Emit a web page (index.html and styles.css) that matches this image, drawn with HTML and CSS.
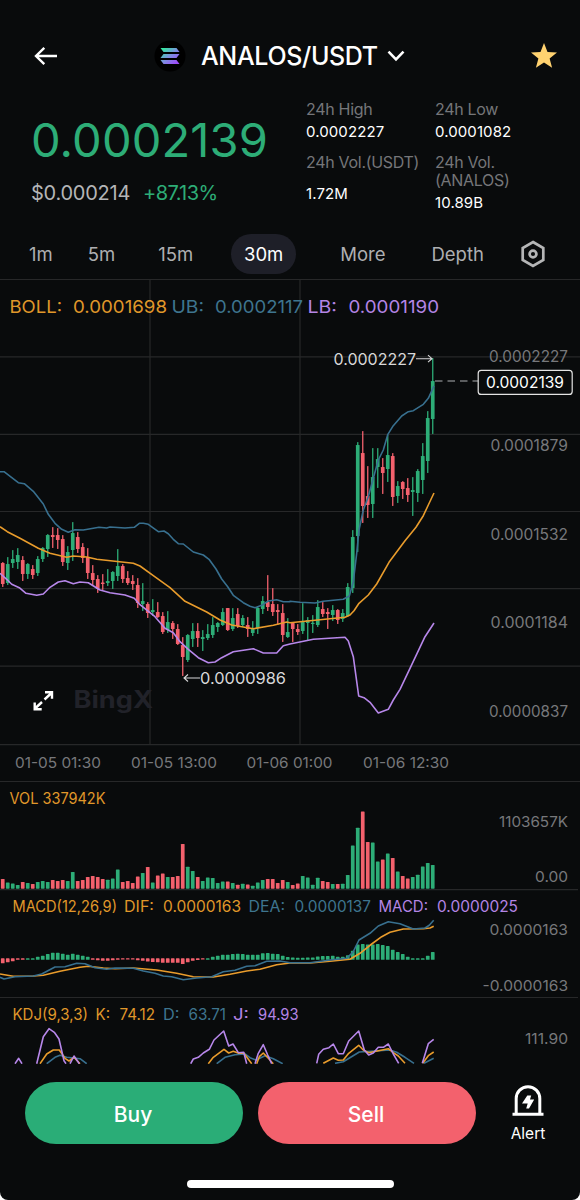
FILE: index.html
```html
<!DOCTYPE html>
<html lang="en">
<head>
<meta charset="utf-8">
<title>ANALOS/USDT</title>
<link rel="stylesheet" href="styles.css">
</head>
<body>
<main class="app">
  <header class="header">
    <svg class="back" viewBox="0 0 24 20"><path d="M23 10H2M10.3 1.8L2 10l8.3 8.2"/></svg>
    <div class="pair">
      <svg class="coin" viewBox="0 0 32 32">
        <defs><linearGradient id="sol" x1="0" y1="0" x2="1" y2="1"><stop offset="0.1" stop-color="#35e3a2"/><stop offset="0.5" stop-color="#7d8fe0"/><stop offset="0.9" stop-color="#9d4bfa"/></linearGradient></defs>
        <circle cx="16" cy="16" r="15.5" fill="#000"/>
        <path fill="url(#sol)" d="M6.5 8h16l3 4h-16zM9.5 14h16l-3 4h-16zM6.5 20h16l3 4h-16z"/>
      </svg>
      <h1 class="pair-name">ANALOS/USDT</h1>
      <svg class="chevron" viewBox="0 0 18 12"><path d="M1.5 1.7l7.5 7.6 7.5-7.6"/></svg>
    </div>
    <svg class="star" viewBox="0 0 28 28"><path d="M14 1l3.5 9 9.5.4-7.4 6 2.5 9.3L14 20.4l-8.1 5.3 2.5-9.3-7.4-6 9.5-.4z"/></svg>
  </header>

  <section class="summary">
    <div class="quote">
      <div class="price">0.0002139</div>
      <div class="sub"><span class="usd">$0.000214</span><span class="change">+87.13%</span></div>
    </div>
    <dl class="stats">
      <div class="stat"><dt>24h High</dt><dd>0.0002227</dd></div>
      <div class="stat"><dt>24h Low</dt><dd>0.0001082</dd></div>
      <div class="stat stat-tall"><dt>24h Vol.(USDT)</dt><dd>1.72M</dd></div>
      <div class="stat"><dt>24h Vol.<br>(ANALOS)</dt><dd>10.89B</dd></div>
    </dl>
  </section>

  <nav class="tabs">
    <span class="tab tab-1m">1m</span>
    <span class="tab tab-5m">5m</span>
    <span class="tab tab-15m">15m</span>
    <span class="tab tab-active">30m</span>
    <span class="tab tab-more">More</span>
    <span class="tab tab-depth">Depth</span>
    <svg class="gear" viewBox="0 0 26 28"><path d="M13 2l10.3 6v12L13 26 2.7 20V8z"/><circle cx="13" cy="14" r="3.4"/></svg>
  </nav>

  <section class="charts">
    <svg id="main" class="pane" height="465" viewBox="0 279 580 465"></svg>
    <svg id="time" class="pane" height="37" viewBox="0 744 580 37"></svg>
    <svg id="volume" class="pane" height="108" viewBox="0 781 580 108"></svg>
    <svg id="macd" class="pane" height="108" viewBox="0 889 580 108"></svg>
    <svg id="kdj" class="pane" height="67" viewBox="0 997 580 67"></svg>
  </section>

  <footer class="actions">
    <button class="btn buy">Buy</button>
    <button class="btn sell">Sell</button>
    <div class="alert">
      <svg class="alert-icon" viewBox="0 0 32 33"><path class="bell" d="M4.2 29V14.5a11.8 11.8 0 0 1 23.6 0V29M.5 30.2h31"/><path class="bolt" d="M15.3 11.5h3.9l-1.2 4h4.2L17 24.6h-2.8l1.5-5.2H10z"/></svg>
      <span>Alert</span>
    </div>
  </footer>
  <div class="home-bar"></div>
</main>
<script src="chart.js"></script>
</body>
</html>
```
FILE: styles.css
```css
* { box-sizing: border-box; }
html { background: #fff; }
body { margin: 0; font-family: Inter, "Liberation Sans", sans-serif; }
.app {
  width: 580px; height: 1200px; overflow: hidden;
  display: flex; flex-direction: column;
  background: #090b0c; color: #fff;
  border-radius: 0 0 8px 8px;
}
.header {
  height: 92px; padding: 19px 22px 0 34px;
  display: flex; align-items: center;
}
.back { width: 24px; height: 20px; fill: none; stroke: #fff; stroke-width: 2.4; }
.pair { display: flex; align-items: center; margin-left: 96px; }
.coin { width: 32px; height: 32px; margin-right: 15px; }
.pair-name { margin: 0; font-size: 25px; line-height: 32px; font-weight: 500; letter-spacing: -0.35px; }
.chevron { width: 18px; height: 12px; margin-left: 9px; fill: none; stroke: #fff; stroke-width: 2.6; }
.star { width: 28px; height: 28px; margin-left: auto; fill: #ffd270; }

.summary { height: 140px; display: flex; padding-left: 31px; }
.quote { width: 275px; padding-top: 19px; }
.price { font-size: 47px; line-height: 58px; letter-spacing: 0.15px; color: #2dad77; }
.sub { display: flex; gap: 13px; margin-top: 12px; font-size: 20px; line-height: 24px; letter-spacing: -0.25px; }
.usd { color: #b4b5b7; }
.change { color: #2dad77; letter-spacing: -0.6px; }
.stats {
  margin: 0; padding-top: 8px; display: grid; align-content: start;
  grid-template-columns: 129px 110px; row-gap: 10px;
}
.stat dt { color: #757679; font-size: 16px; line-height: 18px; letter-spacing: -0.3px; }
.stat dd { margin: 3px 0 0; font-size: 15px; line-height: 21px; padding-bottom: 1px; letter-spacing: 0.1px; }
.stat-tall dd { margin-top: 12px; }

.tabs {
  height: 47px; display: flex; align-items: center; padding: 0 34px 3px 29px;
  font-size: 18.5px; color: #aeafb1;
}
.tab-5m { margin-left: 35px; }
.tab-15m { margin-left: 43px; }
.tab-active {
  width: 65px; height: 40px; line-height: 41px; border-radius: 20px;
  margin-left: 38px; text-align: center; background: #1e1f28; color: #fff;
}
.tab-more { margin-left: 44px; }
.tab-depth { margin-left: 46px; }
.gear { width: 26px; height: 28px; margin-left: auto; fill: none; stroke: #b5b6b7; stroke-width: 2.7; }

.charts { display: flex; flex-direction: column; }
.pane { display: block; width: 580px; }
.grid { stroke: #272829; stroke-width: 1.2; }
.c-up { fill: #2dad77; }
.c-down { fill: #f3616d; }
.line { fill: none; stroke-width: 1.6; stroke-linejoin: round; }
.s-orange { stroke: #e99c2c; }
.s-blue { stroke: #38708f; }
.s-purple { stroke: #b787ea; }
.t-orange { fill: #e0982a; }
.t-blue { fill: #3e758f; }
.t-purple { fill: #b485e5; }
.t-gray { fill: #77787b; }
.t-white { fill: #fff; }
.t-mark { fill: #d8d8d9; }
.t-logo { fill: #212229; font-weight: 700; }
.arrow { fill: none; stroke: #d8d8d9; stroke-width: 1.1; }
.dash { stroke: #aeb0b1; stroke-width: 1.2; stroke-dasharray: 7.5 5; }
.tag { fill: #090b0c; stroke: #e4e4e4; stroke-width: 1.2; }
.expand { fill: none; stroke: #fff; stroke-width: 2.4; }

.actions { display: flex; gap: 15px; padding: 18px 0 0 25px; }
.btn {
  width: 218px; height: 62px; border: 0; border-radius: 31px; padding: 2px 2px 0 0;
  font: 500 21px Inter, "Liberation Sans", sans-serif; color: #fff;
}
.buy { background: #2aad77; }
.sell { background: #f3616d; }
.alert {
  width: 74px; padding-top: 2px; display: flex; flex-direction: column; align-items: center;
  font-size: 15.5px; line-height: 20px;
}
.alert-icon { width: 32px; height: 33px; margin-bottom: 7px; }
.bell { fill: none; stroke: #fff; stroke-width: 3; }
.bolt { fill: #fff; }
.home-bar { width: 207px; height: 8px; border-radius: 4px; background: #fff; margin: 36px 0 0 187px; }
```
FILE: chart.js
```js
const NS = 'http://www.w3.org/2000/svg';
const STEP = 5, X0 = 2.75;

function add(pane, tag, attrs, content) {
  const el = document.createElementNS(NS, tag);
  for (const k in attrs) el.setAttribute(k, attrs[k]);
  if (content) el.textContent = content;
  document.getElementById(pane).appendChild(el);
}
const label = (pane, s, x, end, y, cls, size) => add(pane, 'text', {
  x, y, class: cls, 'font-size': size, textLength: end - x, lengthAdjust: 'spacingAndGlyphs'
}, s);
const rule = (pane, x1, y1, x2, y2, cls = 'grid') => add(pane, 'line', { x1, y1, x2, y2, class: cls });
const bar = (pane, i, top, bottom, w, up, r = 0.6) => add(pane, 'rect', {
  x: X0 + STEP * i - w / 2, y: top, width: w, height: Math.max(bottom - top, 1.2), rx: r,
  class: up ? 'c-up' : 'c-down'
});
// Points are in thirds of a pixel, relative to (ox, oy).
const pts = (ox, oy, s) => s.split(' ').map(p => {
  const [a, b] = p.split(',');
  return (ox + a / 3).toFixed(1) + ',' + (oy + b / 3).toFixed(1);
}).join(' ');
const curve = (pane, cls, points) => add(pane, 'polyline', { points, class: 'line ' + cls });

// direction, high, low, body top, body bottom
const candles = `R 562 587 563 584|G 557 585 564 583|G 550 568 559 563|G 548 569 555 562|R 556 581 560 574|G 563 579 564 574|R 565 579 569 575|G 556 576 559 573|G 547 562 548 559|G 534 557 535 549|R 527 548 535 537|R 528 549 535 540|R 535 566 539 562|G 546 570 552 563|G 522 561 533 550|R 532 553 537 549|R 543 563 547 558|R 548 579 557 573|R 565 585 573 580|R 575 593 579 589|R 574 590 582.5 584|G 569 586 581 583|G 571 589 572 581|G 549 581 566 576|R 564 583 566 579|R 571 585 578 583|R 575 590 581 584|R 578 608 585 603|G 583 611 601 604|R 602 618 604 613|G 599 616 610 612|R 602 618 612 617|R 612 634 616 632|G 611 633 622 630|R 621 639 623 629|R 624 645 629 644|R 637 676 645 657|G 634 662 635 660|G 623 647 631 639|R 623 647 631 638|G 630 651 637 639|G 624 640 634 638|G 617 638 625 635|G 622 632 623 627|G 608 626 612 625|R 608 631 608 630|G 608 631 618 629|R 608 628 614 626|G 615 627 618 625|R 617 637 625 629|G 621 636 629 633|G 607 634 608 628|G 596 614 601 609|R 575 611 602 607|R 588 616 604 612|R 604 625 610 612|R 604 642 613 635|G 618 638 632 637|R 622 642 623 629|R 624 635 629 632|G 603 634 622 631|G 617 640 620 623|G 615 633 622.7 624|G 600 627 607 625|R 602 617 609 614|R 608 629 612 614|G 605 621 610 615|R 609 624 610 620|G 609 622 613 619|G 583 617 587 616|G 530 593 537 588|G 442 552 445 536|R 431 523 453 506|R 466 518 496 505|G 448 518 477 504|G 448 488 459 467|R 458 494 467 473|G 435 482 455 469|R 453 506 456 497|G 481 503 486 496|R 481 499 482 489|R 478 502 488 495|G 477 516 490 492|G 469 502 471 493|G 443 494 456 480|G 411 473 418 461|G 358 434 381 419`
  .split('|').map(r => r.split(' '));
const volumes = [9.7,6.3,5.3,3.7,6.7,5.7,4.7,6.7,7.7,6.7,8.7,7.7,8.7,7.7,16.7,7.7,8.7,11.7,12.7,11.7,9.7,9,10.3,19.3,6.7,7.7,5.7,12.3,15.7,21.7,6.3,13.3,15.3,11.7,11.7,12.7,44.7,22,17.7,11.7,7.7,11.3,10.7,5.7,7.3,7.3,5.7,4,5,4.3,3,6.3,8.7,9.7,9.7,5.7,8.7,6.7,3.7,5.3,12.7,11.3,4,11,7.7,6.7,4.7,4.7,5,13.7,43.3,61,77.3,46.7,46.3,27.3,29.3,35.3,30.7,17.3,12.7,10.3,11.7,14,22.3,25.7,23.7];
const macd = [-5,-4,-3,-1.5,-1.5,1.5,1.5,3,4,5.7,7,7,6,5,6,5,4,3,-1.5,-2,-2.5,-2.5,-2,-1.5,-1.2,-1.2,-1.2,-2,-2.5,-3.3,-3.7,-4,-4.5,-4.5,-4.5,-4.5,-5.7,-4,-2.5,-1.7,-1.2,1.5,3,4,5,5,5.7,6,5.7,5,5,5,6.5,6.7,6,5.7,4,2.7,2.3,2,2,2.3,2.3,3.3,3.7,3.7,4,3,3,4.5,9,15.3,15.7,15.3,15.3,15.7,14.7,13.7,10,7.7,5.7,3,1.5,1.5,1.5,4,7.7];

// Price pane
[279.5, 356.8, 434.3, 511.5, 588.7, 666.2].forEach(y => rule('main', 0, y, 580, y));
[150, 300].forEach(x => rule('main', x, 280, x, 744));
label('main', 'BingX', 73.5, 153, 708, 't-logo', 24);
rule('main', 435, 381, 478, 381, 'dash');
candles.forEach(([d, hi, lo, a, b], i) => {
  bar('main', i, +hi, +lo, 1.3, d === 'G');
  bar('main', i, +a, +b, 3.7, d === 'G');
});
curve('main', 's-blue', [
  pts(0, 460, '0,35 12,35 55,68 73,71 100,94 130,132 145,163 165,190 185,208 205,217 225,209 250,210 297,202 320,204 330,201 375,204 403,202 418,190 428,190'),
  pts(140, 510, '10,40 25,43 55,65 72,63 85,71 100,88 115,101 130,102 160,126 190,135 207,148 228,177 245,207 263,230 280,256 310,278 330,289 345,293 365,286 385,273 410,269 430,275 450,275'),
  pts(290, 340, '0,784 30,787 75,789 100,784 160,778 178,768 190,725 200,640 207,570 220,510 235,470 250,415 265,360 280,330 293,284 310,257 335,228 355,215 370,212 400,193 415,175 432,138')].join(' '));
curve('main', 's-orange', [
  pts(0, 460, '0,200 22,215 60,235 115,265 150,280 200,292 220,288 260,291 290,298 400,310'),
  pts(140, 510, '0,168 40,197 90,233 135,274 200,306 240,330 275,345 340,356 400,346 440,336'),
  pts(290, 340, '0,848 165,832 180,825 192,812 207,790 235,765 260,732 297,667 345,602 378,562 400,527 415,495 432,459')].join(' '));
curve('main', 's-purple', [
  pts(0, 460, '0,340 20,358 35,373 58,383 78,400 110,406 130,402 150,382 175,366 195,362 220,371 240,366 265,368 300,390 330,398 375,405 403,415'),
  pts(140, 510, '0,284 45,320 75,355 100,368 120,395 145,418 175,443 205,458 225,456 245,443 280,425 340,416 370,429 410,429 430,407'),
  pts(290, 340, '0,912 70,898 165,892 175,903 190,950 206,1068 222,1073 240,1087 265,1119 295,1108 310,1080 330,1048 360,985 405,890 432,849')].join(' '));
[['BOLL:', 9.5, 62, 'orange'], ['0.0001698', 73, 167, 'orange'], ['UB:', 171.5, 204, 'blue'], ['0.0002117', 215, 303, 'blue'], ['LB:', 307.5, 337, 'purple'], ['0.0001190', 348.5, 439, 'purple']]
  .forEach(([s, x, e, c]) => label('main', s, x, e, 312.5, 't-' + c, 17.8));
label('main', '0.0002227', 333.5, 416, 365, 't-mark', 16);
add('main', 'path', { class: 'arrow', d: 'M416 358.7h16M428 355.2l4 3.5-4 3.5' });
label('main', '0.0000986', 200, 286, 684, 't-mark', 16);
add('main', 'path', { class: 'arrow', d: 'M200 678h-16M188 674.5l-4 3.5 4 3.5' });
[['0.0002227', 362], ['0.0001879', 451], ['0.0001532', 539.5], ['0.0001184', 628], ['0.0000837', 717]]
  .forEach(([s, y]) => label('main', s, y > 700 || y < 400 ? 489 : 490.5, 568, y, 't-gray', 15.2));
add('main', 'rect', { class: 'tag', x: 478.2, y: 370.4, width: 94, height: 24, rx: 3 });
label('main', '0.0002139', 486, 564, 387.5, 't-white', 15.2);
add('main', 'path', { class: 'expand', d: 'M44.5 699.5l7.5-7M45 692.3h7v6.5M42 702l-7.5 7M34.7 702.5v6.7h7' });

// Time axis
rule('time', 0, 744.6, 580, 744.6);
[['01-05 01:30', 15], ['01-05 13:00', 131], ['01-06 01:00', 246.5], ['01-06 12:30', 363]]
  .forEach(([s, x]) => label('time', s, x, x + 86, 768.4, 't-gray', 15));

// Volume
rule('volume', 0, 781.5, 580, 781.5);
label('volume', 'VOL 337942K', 9.5, 105.5, 803.8, 't-orange', 15.5);
label('volume', '1103657K', 499, 568, 827, 't-gray', 15);
label('volume', '0.00', 535, 568, 882, 't-gray', 15);
volumes.forEach((h, i) => bar('volume', i, 888.7 - h, 888.7, 3.7, candles[i][0] === 'G'));

// MACD
rule('macd', 0, 889.6, 578, 889.6);
[['MACD(12,26,9)', 12.5, 117, 'orange'], ['DIF:', 124, 154, 'orange'], ['0.0000163', 163, 241, 'orange'], ['DEA:', 248.5, 285, 'blue'], ['0.0000137', 294.5, 371, 'blue'], ['MACD:', 378.5, 428, 'purple'], ['0.0000025', 437, 518, 'purple']]
  .forEach(([s, x, e, c]) => label('macd', s, x, e, 912.2, 't-' + c, 15.5));
label('macd', '0.0000163', 489.5, 568, 935.4, 't-gray', 15);
label('macd', '-0.0000163', 482.5, 568, 991, 't-gray', 15);
macd.forEach((v, i) => v > 0 ? bar('macd', i, 959.8 - v, 959.8, 3.7, true) : bar('macd', i, 958.3, 958.3 - v, 3.7, false));
curve('macd', 's-orange', pts(0, 890, '0,252 40,259 100,258 130,256 180,244 240,232 265,229 310,234 345,236 400,234 470,240 530,250 580,260 640,261 690,253 740,243 780,238 830,224 870,219') + ' ' +
  pts(290, 740, '60,669 120,664 180,658 210,640 245,612 275,590 300,577 340,567 400,566 420,564 431,559'));
curve('macd', 's-blue', pts(0, 890, '0,262 12,267 45,260 100,258 125,252 165,231 195,230 230,220 255,221 285,233 320,238 345,234 400,235 430,243 465,250 490,258 515,260 550,269 590,264 635,260 670,245 705,241 740,229 765,227 800,214 840,213 870,218') + ' ' +
  pts(290, 740, '60,668 120,660 170,655 190,635 207,600 240,580 265,558 295,545 330,551 370,567 405,564 418,556 431,541'));

// KDJ
rule('kdj', 0, 997.5, 578, 997.5);
[['KDJ(9,3,3)', 12.5, 88, 'orange'], ['K:', 95.5, 110, 'orange'], ['74.12', 119.5, 155, 'orange'], ['D:', 163, 179.5, 'blue'], ['63.71', 188.5, 226, 'blue'], ['J:', 233, 249, 'purple'], ['94.93', 258, 298.5, 'purple']]
  .forEach(([s, x, e, c]) => label('kdj', s, x, e, 1020.3, 't-' + c, 15.5));
label('kdj', '111.90', 525, 568, 1043.8, 't-gray', 15);
const kdj = {
  's-blue': [['140,521 165,502 180,496 200,502 240,506 260,521', '650,521 675,502 705,494 735,492 750,503 768,510 795,497 820,506 848,521'],
    ['135,190 160,185 208,156 300,150 320,157 345,172 372,190', '402,190 431,175']],
  's-orange': [['120,521 140,492 160,480 178,480 195,505 207,513 222,502 240,521', '625,521 640,502 672,478 686,489 700,484 716,490 731,489 755,521', '770,521 778,500 790,489 805,505 820,521'],
    ['100,190 130,174 145,181 160,180 176,160 206,136 220,150 236,158 295,146 310,158 325,168 345,190', '398,190 415,167 431,156']],
  's-purple': [['45,521 56,505 66,521', '110,521 130,440 147,416 163,427 177,447 192,512 198,521', '210,521 222,498 238,521', '572,521 580,507 595,502 610,489 628,478 642,450 671,423 686,468 699,462 715,488 731,487 740,521', '765,521 775,490 790,464 803,495 815,521'],
    ['80,190 86,163 100,148 117,143 130,132 145,161 160,161 176,123 206,93 223,150 236,165 250,159 265,142 280,142 295,132 310,162 326,190', '397,190 415,131 431,118']]
};
for (const cls in kdj) {
  kdj[cls][0].forEach(s => curve('kdj', cls, pts(0, 890, s)));
  kdj[cls][1].forEach(s => curve('kdj', cls, pts(290, 1000, s)));
}
```
